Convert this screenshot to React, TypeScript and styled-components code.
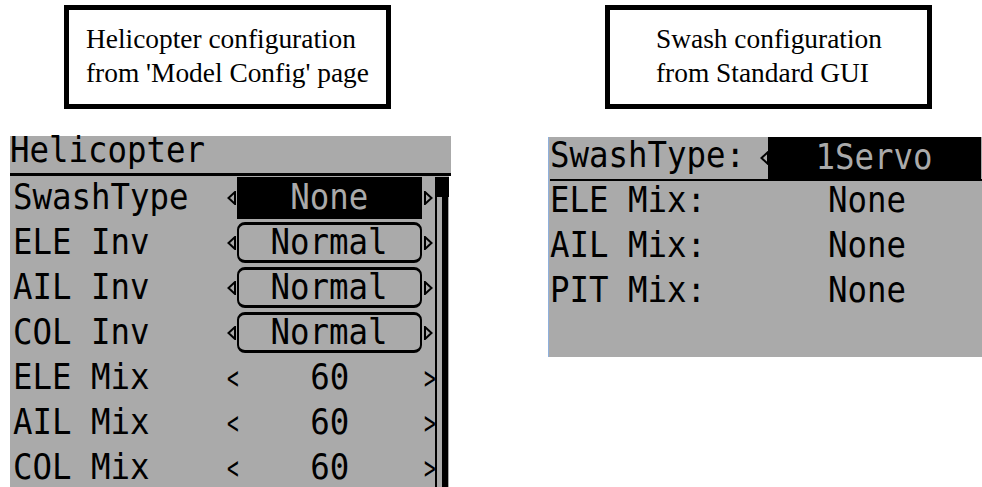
import React from "react";
import styled, { createGlobalStyle } from "styled-components";

const GlobalStyle = createGlobalStyle`
  html, body {
    margin: 0;
    padding: 0;
    background: #fff;
  }
  body {
    width: 982px;
    height: 487px;
    overflow: hidden;
  }
`;

const LCD_GRAY = "#aaaaaa";

type Kind = "selected" | "boxed" | "plain";
type ArrowStyle = "tri" | "chevron";

type HeliRow = {
  label: string;
  value: string;
  kind: Kind;
  arrows: ArrowStyle;
};

const heliRows: HeliRow[] = [
  { label: "SwashType", value: "None", kind: "selected", arrows: "tri" },
  { label: "ELE Inv", value: "Normal", kind: "boxed", arrows: "tri" },
  { label: "AIL Inv", value: "Normal", kind: "boxed", arrows: "tri" },
  { label: "COL Inv", value: "Normal", kind: "boxed", arrows: "tri" },
  { label: "ELE Mix", value: "60", kind: "plain", arrows: "chevron" },
  { label: "AIL Mix", value: "60", kind: "plain", arrows: "chevron" },
  { label: "COL Mix", value: "60", kind: "plain", arrows: "chevron" },
];

const swashRows = [
  { label: "ELE Mix:", value: "None" },
  { label: "AIL Mix:", value: "None" },
  { label: "PIT Mix:", value: "None" },
];

const Tri = ({ dir }: { dir: "left" | "right" }) => (
  <TriSvg width="9" height="14" viewBox="0 0 9 14">
    <polygon
      points={dir === "left" ? "8,1 1.5,7 8,13" : "1,1 7.5,7 1,13"}
      fill="none"
      stroke="#000"
      strokeWidth="2"
    />
  </TriSvg>
);

export default function App() {
  return (
    <>
      <GlobalStyle />
      <Page>
        <Column>
          <Caption $indent={54} $pad={17}>
            Helicopter configuration
            <br />
            from 'Model Config' page
          </Caption>
          <HeliPanel>
            <HeliHeader>
              <Txt>Helicopter</Txt>
            </HeliHeader>
            <HeliBody>
              <RowList>
                {heliRows.map((row) => (
                  <HeliRowLine key={row.label}>
                    <Label $pad={3}>
                      <Txt>{row.label}</Txt>
                    </Label>
                    <ArrowCell>
                      {row.arrows === "tri" ? <Tri dir="left" /> : <Chevron>&lt;</Chevron>}
                    </ArrowCell>
                    <ValueBox $kind={row.kind}>
                      <Txt $center>{row.value}</Txt>
                    </ValueBox>
                    <ArrowCell $pad={2}>
                      {row.arrows === "tri" ? <Tri dir="right" /> : <Chevron>&gt;</Chevron>}
                    </ArrowCell>
                  </HeliRowLine>
                ))}
              </RowList>
              <ScrollBar>
                <ScrollCap />
                <ScrollTrack>
                  <ScrollThumb />
                </ScrollTrack>
              </ScrollBar>
            </HeliBody>
          </HeliPanel>
        </Column>

        <Column>
          <Caption $indent={57} $pad={46}>
            Swash configuration
            <br />
            from Standard GUI
          </Caption>
          <SwashPanel>
            <SwashHeader>
              <Label>
                <Txt>SwashType:</Txt>
              </Label>
              <ArrowCell>
                <Tri dir="left" />
              </ArrowCell>
              <ValueBox $kind="selected">
                <Txt $center>1Servo</Txt>
              </ValueBox>
              <ArrowCell $pad={1}>
                <Tri dir="right" />
              </ArrowCell>
            </SwashHeader>
            {swashRows.map((row) => (
              <SwashRowLine key={row.label}>
                <Label>
                  <Txt>{row.label}</Txt>
                </Label>
                <Label>
                  <Txt>{row.value}</Txt>
                </Label>
              </SwashRowLine>
            ))}
          </SwashPanel>
        </Column>
      </Page>
    </>
  );
}

const Page = styled.div`
  display: grid;
  grid-template-columns: 441px 441px;
  column-gap: 97px;
  align-items: start;
  width: 982px;
  height: 487px;
  padding: 5px 0 0 10px;
  box-sizing: border-box;
  overflow: hidden;
`;

const Column = styled.div`
  display: flex;
  flex-direction: column;
  align-items: flex-start;
`;

const Caption = styled.div<{ $indent: number; $pad: number }>`
  margin-left: ${({ $indent }) => $indent}px;
  width: 327px;
  height: 104px;
  box-sizing: border-box;
  border: 5px solid #000;
  padding: 11.5px 0 0 ${({ $pad }) => $pad}px;
  font-family: "Liberation Serif", "Times New Roman", serif;
  font-size: 27.4px;
  line-height: 34.5px;
  color: #000;
  white-space: nowrap;
`;

const LcdBase = styled.div`
  font-family: "DejaVu Sans Mono", "Liberation Mono", monospace;
  font-size: 36px;
  color: #000;
  white-space: pre;
`;

/* LCD glyphs are tall and narrow: squeeze the mono font horizontally */
const Txt = styled.span<{ $center?: boolean }>`
  display: inline-block;
  transform: scaleX(0.9);
  transform-origin: ${({ $center }) => ($center ? "center" : "left")} center;
`;

const HeliPanel = styled(LcdBase)`
  margin-top: 27px;
  width: 441px;
  display: flex;
  flex-direction: column;
`;

const HeliHeader = styled.div`
  height: 37px;
  line-height: 27px;
  background: ${LCD_GRAY};
  border-bottom: 3px solid #000;
`;

const HeliBody = styled.div`
  width: 439px;
  padding-top: 1px;
  background: ${LCD_GRAY};
  display: grid;
  grid-template-columns: 425px 14px;
`;

const RowList = styled.div`
  display: flex;
  flex-direction: column;
`;

const HeliRowLine = styled.div`
  display: grid;
  grid-template-columns: 217px 10px 185px 13px;
  align-items: start;
  height: 45px;
  line-height: 39px;
`;

const Label = styled.div<{ $pad?: number }>`
  padding-left: ${({ $pad }) => $pad ?? 0}px;
`;

const ArrowCell = styled.div<{ $pad?: number }>`
  display: flex;
  align-items: center;
  height: 42px;
  padding-left: ${({ $pad }) => $pad ?? 0}px;
`;

const TriSvg = styled.svg`
  display: block;
  flex: none;
`;

const Chevron = styled.span`
  display: inline-block;
  font-size: 26px;
  line-height: 42px;
  transform: scale(0.75, 1.2);
  transform-origin: left center;
`;

const ValueBox = styled.div<{ $kind: Kind }>`
  box-sizing: border-box;
  height: ${({ $kind }) => ($kind === "boxed" ? 41 : 42)}px;
  text-align: center;
  line-height: ${({ $kind }) => ($kind === "boxed" ? 33 : 39)}px;
  background: ${({ $kind }) => ($kind === "selected" ? "#000" : "transparent")};
  color: ${({ $kind }) => ($kind === "selected" ? LCD_GRAY : "#000")};
  border-style: solid;
  border-color: #000;
  border-width: ${({ $kind }) => ($kind === "boxed" ? "3px 2px" : "0")};
  border-radius: ${({ $kind }) => ($kind === "boxed" ? "8px" : "0")};
`;

const ScrollBar = styled.div`
  display: flex;
  flex-direction: column;
  height: 320px;
`;

const ScrollCap = styled.div`
  height: 20px;
  background: #000;
`;

const ScrollTrack = styled.div`
  flex: 1;
  display: flex;
  border-left: 2px solid #000;
  padding-left: 5px;
`;

const ScrollThumb = styled.div`
  width: 6px;
  background: #000;
`;

const SwashPanel = styled(LcdBase)`
  margin-top: 28px;
  width: 441px;
  height: 220px;
  box-sizing: border-box;
  background: ${LCD_GRAY};
  border-left: 1px solid #8fb0dc;
  padding-left: 1px;
  display: flex;
  flex-direction: column;
`;

const SwashHeader = styled.div`
  display: grid;
  grid-template-columns: 210px 8px 213px 12px;
  height: 42px;
  line-height: 35px;
  border-bottom: 2px solid #000;

  & > div:nth-child(3) {
    line-height: 39px;
  }
`;

const SwashRowLine = styled.div`
  display: grid;
  grid-template-columns: 278px 1fr;
  height: 45px;
  line-height: 37px;
`;
